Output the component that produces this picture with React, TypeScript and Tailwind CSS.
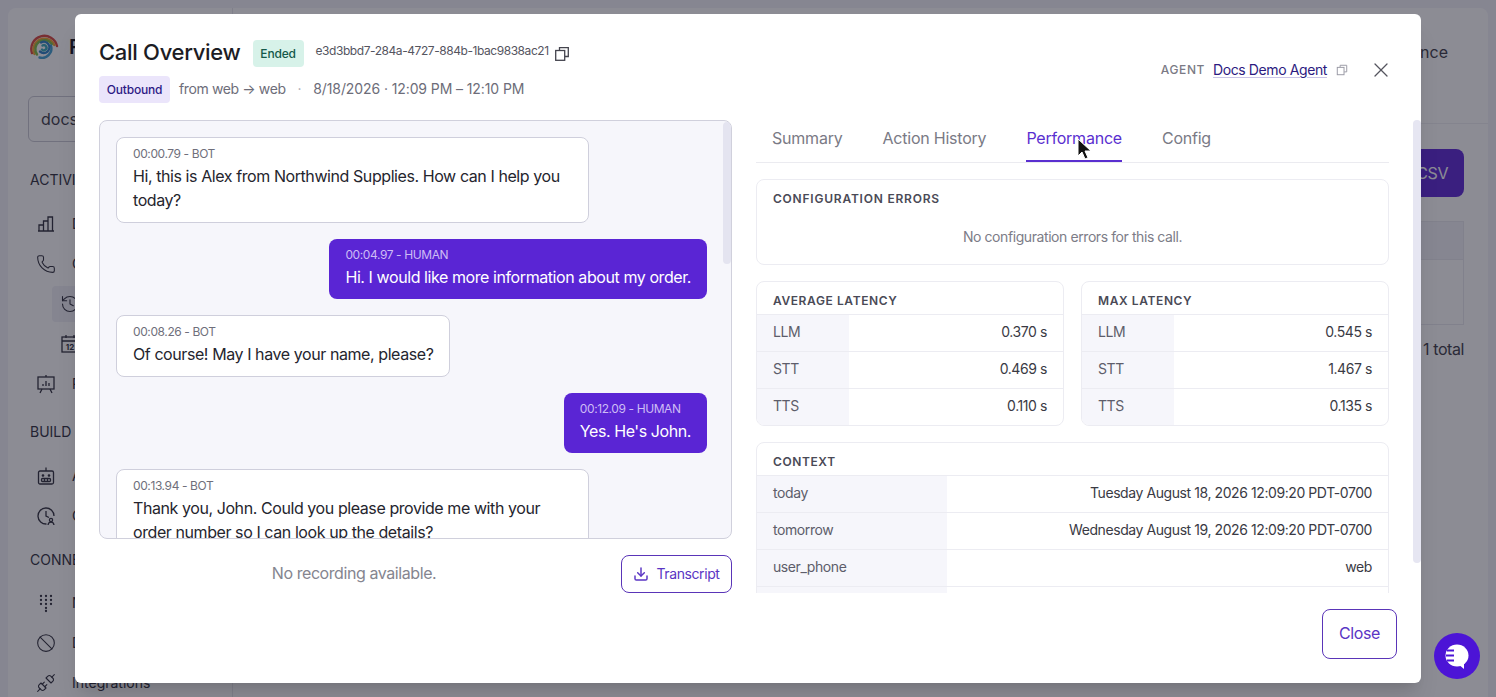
import { Ban, Download, History, Phone, Unplug, X } from "lucide-react"

const font = { fontFamily: "Inter, 'Liberation Sans', sans-serif" }

function CopyIcon({ size = 16, className = "" }: { size?: number; className?: string }) {
  return (
    <svg width={size} height={size} viewBox="0 0 16 16" fill="none" stroke="currentColor" strokeWidth="1.3" className={className}>
      <path d="M5.500 4V1.700h8.800v8.800H11" />
      <rect x="1.700" y="4.500" width="9" height="9.800" />
    </svg>
  )
}

function BarsIcon() {
  return (
    <svg width="20" height="20" viewBox="0 0 20 20" fill="none" stroke="currentColor" strokeWidth="1.3">
      <path d="M2 17h16M3 17v-6h4.500v6M7.500 17V7H12v10M12 17V3h4.500v14" />
    </svg>
  )
}

function CalendarIcon() {
  return (
    <svg width="20" height="20" viewBox="0 0 20 20" fill="none" stroke="currentColor" strokeWidth="1.3">
      <rect x="2" y="3" width="16" height="15" />
      <path d="M2 7h16M6 1v3M14 1v3" />
      <text x="10" y="16" fontSize="8" fontWeight="700" textAnchor="middle" fill="currentColor" stroke="none">12</text>
    </svg>
  )
}

function ClockUserIcon() {
  return (
    <svg width="20" height="20" viewBox="0 0 20 20" fill="none" stroke="currentColor" strokeWidth="1.3">
      <path d="M10.500 18a8 8 0 1 1 7.500-8" />
      <path d="M10 5v5l3 1.500" />
      <circle cx="15" cy="14" r="1.600" />
      <path d="M12 19c.3-2 1.500-2.800 3-2.800s2.700.8 3 2.800" />
    </svg>
  )
}

function ReportIcon() {
  return (
    <svg width="20" height="20" viewBox="0 0 20 20" fill="none" stroke="currentColor" strokeWidth="1.3">
      <path d="M10 1v2" />
      <rect x="2" y="3" width="16" height="12" />
      <path d="M7 12V10M10 12V7M13 12V9M6 15l-2 4M14 15l2 4" />
    </svg>
  )
}

function BotIcon() {
  return (
    <svg width="20" height="20" viewBox="0 0 20 20" fill="none" stroke="currentColor" strokeWidth="1.3">
      <path d="M10 1.500V5" />
      <rect x="2.500" y="5" width="15" height="13" rx="1.500" />
      <circle cx="7" cy="9.500" r=".7" fill="currentColor" />
      <circle cx="13" cy="9.500" r=".7" fill="currentColor" />
      <rect x="5.500" y="12.500" width="9" height="3" rx="1" />
      <path d="M8.500 12.500v3M11.500 12.500v3" />
    </svg>
  )
}

function DialIcon() {
  const dots = [
    [5, 3], [10, 3], [15, 3],
    [5, 7], [10, 7], [15, 7],
    [5, 11], [10, 11], [15, 11],
    [10, 15], [10, 18],
  ]
  return (
    <svg width="20" height="20" viewBox="0 0 20 20" fill="currentColor">
      {dots.map(([x, y], i) => <circle key={i} cx={x} cy={y} r="1.150" />)}
    </svg>
  )
}

function Logo() {
  return (
    <svg width="30" height="30" viewBox="0 0 30 30" fill="none" strokeWidth="2.400" strokeLinecap="round" className="ml-px">
      <path d="M3 21A13 13 0 1 1 28 14" stroke="#d9453c" />
      <path d="M5.500 22A10.500 10.500 0 1 1 25.300 13" stroke="#f0a02c" />
      <path d="M8 22.500A8.200 8.200 0 1 1 22.800 12" stroke="#7dbb45" />
      <path d="M10.500 25.500a9.500 9.500 0 0 0 11.500-12" stroke="#3f9fd1" />
      <path d="M11 19.500a5.600 5.600 0 1 0 1-9" stroke="#2a7fc4" />
      <path d="M13 17.500a2.600 2.600 0 1 0 .5-4" stroke="#35a7b8" />
    </svg>
  )
}

function NavLabel({ children, className = "" }: { children: string; className?: string }) {
  return <div className={`h-5 ml-0.5 text-sm leading-5 text-[#2d2d3a] ${className}`}>{children}</div>
}

function NavItem({ icon, label, sub, active }: { icon: React.ReactNode; label: string; sub?: boolean; active?: boolean }) {
  return (
    <div className={`h-10 flex items-center gap-4 text-sm text-[#2d2d3a] ${sub ? "ml-6" : ""}`}>
      <div className={`flex items-center gap-4 w-full h-9 pl-2 rounded ${active ? "bg-[#f0f0f6]" : ""}`}>
        <span className="w-5 shrink-0">{icon}</span>
        <span>{label}</span>
      </div>
    </div>
  )
}

function Background() {
  return (
    <div className="h-[697px] bg-[#f2f2f9] p-2 pb-0">
      <div className="h-full flex bg-white rounded-t-lg overflow-hidden">
        <aside className="w-[225px] shrink-0 border-r border-[#e6e6ec] px-5">
          <div className="h-[78px] flex items-center gap-[10px]">
            <Logo />
            <span className="text-xl font-semibold text-[#14141c]">Retell AI</span>
          </div>
          <div className="mt-[10px] h-[46px] flex items-center px-3 border border-[#c9c9d2] rounded-md text-base text-[#3a3a46]">docs</div>
          <NavLabel className="mt-[28px]">ACTIVITY</NavLabel>
          <div className="mt-[14px]">
            <NavItem icon={<BarsIcon />} label="Dashboard" />
            <NavItem icon={<Phone size={20} strokeWidth={1.3} />} label="Calls" />
            <NavItem icon={<History size={20} strokeWidth={1.3} />} label="History" sub active />
            <NavItem icon={<CalendarIcon />} label="Batch" sub />
            <NavItem icon={<ReportIcon />} label="Reports" />
          </div>
          <NavLabel className="mt-[18px]">BUILD</NavLabel>
          <div className="mt-[14px]">
            <NavItem icon={<BotIcon />} label="Agents" />
            <NavItem icon={<ClockUserIcon />} label="Call flows" />
          </div>
          <NavLabel className="mt-[14px]">CONNECT</NavLabel>
          <div className="mt-[13px]">
            <NavItem icon={<DialIcon />} label="Numbers" />
            <NavItem icon={<Ban size={20} strokeWidth={1.3} />} label="Do not call" />
            <NavItem icon={<Unplug size={20} strokeWidth={1.3} />} label="Integrations" />
          </div>
        </aside>
        <main className="flex-1 flex flex-col pr-6">
          <div className="h-[116px] -mr-6 pr-10 pt-8 flex justify-end border-b border-[#eeeef3] text-base leading-6 text-[#3a3a46]">Balance</div>
          <button className="mt-[25px] h-12 w-[140px] self-end flex items-center justify-end pr-4 rounded-lg bg-[#5a25d4] text-base tracking-[-0.42px] text-white">Export CSV</button>
          <div className="mt-6 h-[104px] border border-[#e9e9ef]">
            <div className="h-[38px] bg-[#f3f3f8] border-b border-[#e9e9ef]" />
          </div>
          <div className="mt-3 h-6 text-right text-base leading-6 tracking-[-0.42px] text-[#3a3a46]">1 total</div>
        </main>
      </div>
    </div>
  )
}

function BotBubble({ time, children }: { time: string; children: React.ReactNode }) {
  return (
    <div className="max-w-[80%] self-start bg-white border border-[#cfcfdc] rounded-lg px-4 pt-2 pb-[10px]">
      <div className="text-xs leading-4 pb-0.5 tracking-[-0.4px] text-[#6f6f7b]">{time} - BOT</div>
      <div className="text-base leading-6 tracking-[-0.42px] text-[#25252e]">{children}</div>
    </div>
  )
}

function HumanBubble({ time, children }: { time: string; children: React.ReactNode }) {
  return (
    <div className="max-w-[80%] self-end bg-[#5a25d4] rounded-lg px-4 pt-2 pb-[10px]">
      <div className="text-xs leading-4 pb-0.5 tracking-[-0.4px] text-[#cdbcf5]">{time} - HUMAN</div>
      <div className="text-base leading-6 tracking-[-0.42px] text-white">{children}</div>
    </div>
  )
}

function MetricTable({ title, rows, labelWidth, className = "flex-1" }: { title: string; rows: string[][]; labelWidth: string; className?: string }) {
  return (
    <div className={`${className} border border-[#ececf2] rounded-lg overflow-hidden`}>
      <div className="h-8 pl-4 pt-3 text-xs leading-[14px] font-semibold tracking-[0.05em] text-[#4a4a56]">{title}</div>
      {rows.map(([label, value], i) => (
        <div key={i} className="h-[37px] flex border-t border-[#ececf2] text-sm tracking-[-0.42px]">
          <div className={`${labelWidth} shrink-0 bg-[#f6f6fb] pl-4 pb-0.5 flex items-center text-[#5d5d6a]`}>{label}</div>
          <div className="flex-1 pr-4 pb-0.5 flex items-center justify-end text-[#3a3a44]">{value}</div>
        </div>
      ))}
    </div>
  )
}

function CallModal() {
  return (
    <div className="absolute inset-0 bg-[#1a1a2a]/50 flex items-center justify-center">
      <div className="w-[1346px] h-[669px] bg-white rounded-md shadow-xl flex flex-col overflow-hidden">
        <div className="h-[106px] shrink-0 pl-6 pr-[28px] pt-[26px] flex justify-between">
          <div>
            <div className="flex items-start gap-3">
              <h2 className="text-[22px] leading-[24px] tracking-[-0.3px] font-medium text-[#1c1c24]">Call Overview</h2>
              <span className="h-[27px] w-[51px] flex items-center justify-center rounded bg-[#d7f2e9] text-xs tracking-[-0.2px] font-medium text-[#14594a]">Ended</span>
              <span className="text-xs leading-[22px] tracking-[-0.44px] text-[#55555f]">e3d3bbd7-284a-4727-884b-1bac9838ac21</span>
              <CopyIcon className="text-[#44444e] mt-[6px] -ml-[7px]" />
            </div>
            <div className="mt-[9px] flex items-center text-sm tracking-[-0.38px] text-[#6d6d79]">
              <span className="h-[27px] w-[71px] flex items-center justify-center rounded bg-[#ebe5fb] text-xs tracking-[-0.2px] font-medium text-[#2d1a85]">Outbound</span>
              <span className="ml-[9px] pb-0.5">from web → web</span>
              <span className="ml-3 pb-0.5 text-[#a9a9b3]">·</span>
              <span className="ml-3 pb-0.5 tracking-[-0.1px]">8/18/2026 · 12:09 PM – 12:10 PM</span>
            </div>
          </div>
          <div className="flex items-center h-[60px]">
            <span className="text-xs font-medium tracking-[0.05em] text-[#7a7a85]">AGENT</span>
            <span className="ml-2 text-sm tracking-[-0.4px] text-[#2c1a80] underline decoration-[#c9c4e6] underline-offset-2">Docs Demo Agent</span>
            <CopyIcon size={12} className="ml-[9px] text-[#9a9aa5]" />
            <X size={24} strokeWidth={1.3} className="ml-[21px] text-[#55555f]" />
          </div>
        </div>

        <div className="h-[473px] shrink-0 flex pl-6">
          <div className="w-[633px] shrink-0 flex flex-col">
            <div className="relative h-[419px] shrink-0 bg-[#f6f6fb] border border-[#d0d0dc] rounded-lg overflow-hidden">
              <div className="flex flex-col gap-4 pl-4 pr-6 pt-4">
                <BotBubble time="00:00.79">Hi, this is Alex from Northwind Supplies. How can I help you today?</BotBubble>
                <HumanBubble time="00:04.97">Hi. I would like more information about my order.</HumanBubble>
                <BotBubble time="00:08.26">Of course! May I have your name, please?</BotBubble>
                <HumanBubble time="00:12.09">Yes. He's John.</HumanBubble>
                <BotBubble time="00:13.94">Thank you, John. Could you please provide me with your order number so I can look up the details?</BotBubble>
              </div>
              <div className="absolute right-0 top-px w-2 h-[142px] rounded bg-[#e4e4f0]" />
            </div>
            <div className="mt-4 flex items-center gap-3">
              <div className="flex-1 pb-0.5 text-center text-base tracking-[-0.42px] text-[#85858f]">No recording available.</div>
              <button className="w-[111px] h-[38px] pb-px flex items-center justify-center gap-[7px] border border-[#5a35b8] rounded-lg text-sm tracking-[-0.4px] text-[#5a35c4]">
                <Download size={16} strokeWidth={2.2} />
                Transcript
              </button>
            </div>
          </div>

          <div className="relative flex-1 ml-6 pr-8 overflow-hidden">
            <div className="h-[43px] flex gap-10 pl-4 border-b border-[#ebebf0] text-base tracking-[-0.22px]">
              <span className="pt-[6px] text-[#7a7a85]">Summary</span>
              <span className="pt-[6px] text-[#7a7a85]">Action History</span>
              <span className="pt-[6px] text-[#5a2fd0] border-b-2 border-[#5a2fd0] h-[42px]">Performance</span>
              <span className="pt-[6px] text-[#7a7a85]">Config</span>
            </div>
            <div className="mt-4 h-[86px] border border-[#ececf2] rounded-lg">
              <div className="pl-4 pt-3 text-xs leading-[14px] font-semibold tracking-[0.065em] text-[#4a4a56]">CONFIGURATION ERRORS</div>
              <div className="mt-[21px] text-center text-sm leading-5 tracking-[-0.42px] text-[#7c7c87]">No configuration errors for this call.</div>
            </div>
            <div className="mt-4 flex justify-between">
              <MetricTable title="AVERAGE LATENCY" className="w-[308px]" labelWidth="w-[92px]" rows={[["LLM", "0.370 s"], ["STT", "0.469 s"], ["TTS", "0.110 s"]]} />
              <MetricTable title="MAX LATENCY" className="w-[308px]" labelWidth="w-[92px]" rows={[["LLM", "0.545 s"], ["STT", "1.467 s"], ["TTS", "0.135 s"]]} />
            </div>
            <div className="mt-4">
              <MetricTable
                title="CONTEXT"
                labelWidth="w-[190px]"
                rows={[
                  ["today", "Tuesday August 18, 2026 12:09:20 PDT-0700"],
                  ["tomorrow", "Wednesday August 19, 2026 12:09:20 PDT-0700"],
                  ["user_phone", "web"],
                  ["", ""],
                ]}
              />
            </div>
            <div className="absolute right-0 top-0 w-2 h-[443px] rounded bg-[#e6e6f2]" />
          </div>
        </div>

        <div className="flex justify-end pt-4 pr-6">
          <button className="w-[75px] h-[50px] pb-0.5 border border-[#5a35b8] rounded-lg text-base tracking-[-0.4px] text-[#5a35c4]">Close</button>
        </div>
      </div>

      <svg width="16" height="24" viewBox="0 0 16 24" className="absolute left-[1076px] top-[138px]">
        <path d="M2 1v17l4-4 3 7 3-1.300-3-6.700h6z" fill="#111" stroke="#fff" strokeWidth="1" />
      </svg>

      <div className="absolute left-[1434px] top-[633px] w-[46px] h-[46px] rounded-full bg-[#4c14d6] flex items-center justify-center">
        <svg width="24" height="26" viewBox="0 0 24 26" fill="none" className="mt-[2px]">
          <ellipse cx="12" cy="11.500" rx="11.500" ry="11" fill="#fff" />
          <path d="M13 20l6 5v-7z" fill="#fff" />
          <path d="M2 6.500h7M1 11.500h8M2 16.500h7" stroke="#4c14d6" strokeWidth="2.200" />
        </svg>
      </div>
    </div>
  )
}

export default function App() {
  return (
    <div className="relative w-full h-[697px] overflow-hidden" style={font}>
      <Background />
      <CallModal />
    </div>
  )
}
